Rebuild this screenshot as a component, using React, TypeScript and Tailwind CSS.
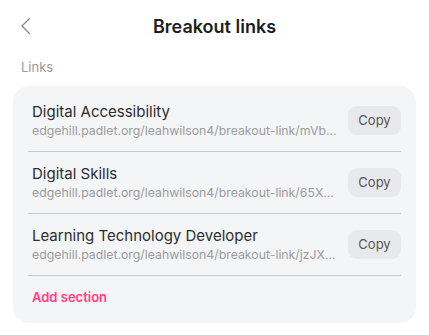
const LINKS = [
  { name: "Digital Accessibility", url: "edgehill.padlet.org/leahwilson4/breakout-link/mVb..." },
  { name: "Digital Skills", url: "edgehill.padlet.org/leahwilson4/breakout-link/65X..." },
  { name: "Learning Technology Developer", url: "edgehill.padlet.org/leahwilson4/breakout-link/jzJX..." },
];

export default function App() {
  return (
    <div
      className="min-h-screen w-[429px] bg-white px-[13px]"
      style={{ fontFamily: "Inter, 'Noto Sans', sans-serif" }}
    >
      {/* header */}
      <div className="relative flex h-[52px] items-center justify-center">
        <button type="button" className="absolute left-[6px] top-[16px] text-[#8a8a8a]">
          <svg width="14" height="20" viewBox="0 0 14 20" fill="none">
            <path d="M10.5 2.5 3 10l7.5 7.5" stroke="currentColor" strokeWidth="1.4" strokeLinecap="round" strokeLinejoin="round" />
          </svg>
        </button>
        <h1 className="text-[18px] font-semibold text-[#1d1d1f]">Breakout links</h1>
      </div>

      <div className="flex h-[34px] items-center px-2 pb-[2px] text-[13px] text-[#9a9a9a]">Links</div>

      {/* card */}
      <div className="rounded-[16px] bg-[#f4f5f7] px-[15px] pb-[16px] pt-[4px]">
        {LINKS.map((l) => (
          <div key={l.name} className="flex items-center gap-[10px] border-b border-[#c9c9cb] py-3 pl-1">
            <div className="min-w-0 flex-1">
              <div className="truncate text-[15px] leading-5 text-[#2e2e2e]">{l.name}</div>
              <div className="truncate text-[12.3px] leading-[17px] text-[#9c9c9c]">{l.url}</div>
            </div>
            <button
              type="button"
              className="h-[29px] w-[53px] shrink-0 rounded-[9px] bg-[#e8e9ec] text-[13px] text-[#555]"
            >
              Copy
            </button>
          </div>
        ))}
        <div className="pl-1 pt-[11px] text-[13px] font-semibold leading-5 text-[#ff4081]">Add section</div>
      </div>
    </div>
  );
}
